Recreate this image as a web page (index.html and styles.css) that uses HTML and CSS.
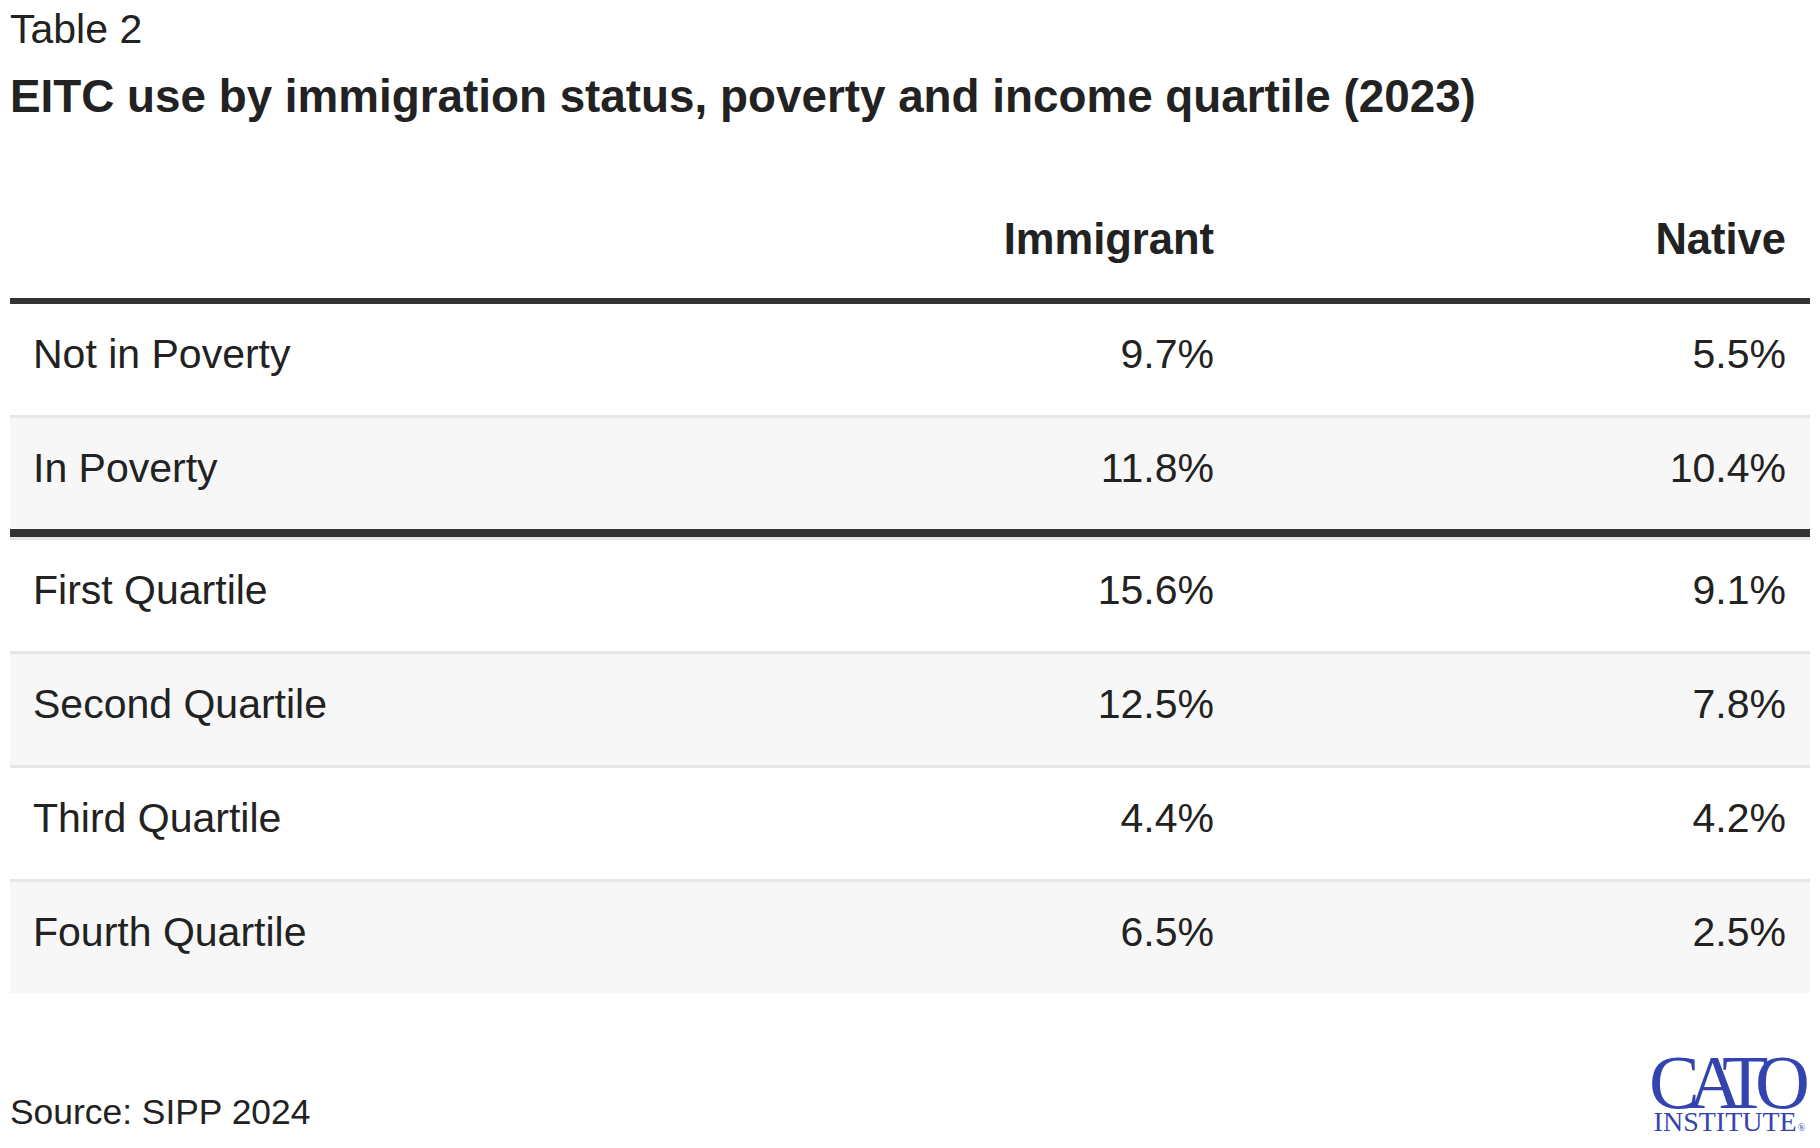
FILE: index.html
```html
<!DOCTYPE html>
<html lang="en">
<head>
<meta charset="utf-8">
<title>Table 2 – EITC use by immigration status</title>
<link rel="stylesheet" href="styles.css">
</head>
<body>
<div class="page">
  <div class="label">Table 2</div>
  <h1 class="title">EITC use by immigration status, poverty and income quartile (2023)</h1>

  <div class="table">
    <div class="thead">
      <div class="cell"></div>
      <div class="cell num">Immigrant</div>
      <div class="cell num">Native</div>
    </div>
    <div class="group first-group">
      <div class="row">
        <div class="cell">Not in Poverty</div>
        <div class="cell num">9.7%</div>
        <div class="cell num">5.5%</div>
      </div>
      <div class="row alt">
        <div class="cell">In Poverty</div>
        <div class="cell num">11.8%</div>
        <div class="cell num">10.4%</div>
      </div>
    </div>
    <div class="group second-group">
      <div class="row">
        <div class="cell">First Quartile</div>
        <div class="cell num">15.6%</div>
        <div class="cell num">9.1%</div>
      </div>
      <div class="row alt">
        <div class="cell">Second Quartile</div>
        <div class="cell num">12.5%</div>
        <div class="cell num">7.8%</div>
      </div>
      <div class="row">
        <div class="cell">Third Quartile</div>
        <div class="cell num">4.4%</div>
        <div class="cell num">4.2%</div>
      </div>
      <div class="row alt">
        <div class="cell">Fourth Quartile</div>
        <div class="cell num">6.5%</div>
        <div class="cell num">2.5%</div>
      </div>
    </div>
  </div>

  <div class="footer">
    <div class="source">Source: SIPP 2024</div>
    <div class="logo">
      <div class="logo-cato">CATO</div>
      <div class="logo-inst">INSTITUTE<span class="logo-reg">®</span></div>
    </div>
  </div>
</div>
</body>
</html>
```

FILE: styles.css
```css
html, body {
  margin: 0;
  padding: 0;
  background: #ffffff;
}

body {
  font-family: "Liberation Sans", Arial, sans-serif;
  color: #222222;
}

.page {
  padding: 0 10px;
}

.label {
  font-size: 41px;
  line-height: 48px;
  padding-top: 5px;
}

.title {
  margin: 16px 0 0 0;
  font-size: 45.8px;
  line-height: 56px;
  font-weight: bold;
}

.table {
  display: flex;
  flex-direction: column;
}

.thead,
.row {
  display: grid;
  grid-template-columns: 1fr 572px 572px;
}

.thead {
  border-bottom: 6px solid #333333;
}

.thead .cell {
  font-size: 43.5px;
  line-height: 50px;
  font-weight: bold;
  padding: 89px 24px 34px 23px;
}

.row {
  border-top: 3px solid #e6e6e6;
}

.first-group .row:first-child {
  border-top: none;
}

.second-group {
  border-top: 8px solid #333333;
}

.row.alt {
  background: #f7f7f7;
}

.row .cell {
  font-size: 41px;
  line-height: 48px;
  padding: 26px 24px 37px 23px;
}

.cell.num {
  text-align: right;
}

.footer {
  display: flex;
  justify-content: space-between;
  align-items: flex-end;
  margin-top: 60px;
}

.source {
  font-size: 35.4px;
  line-height: 40px;
  margin-bottom: 7px;
}

.logo {
  display: flex;
  flex-direction: column;
  align-items: center;
  color: #3344b0;
  font-family: "Liberation Serif", "Times New Roman", serif;
}

.logo-cato {
  font-size: 76px;
  line-height: 58px;
  letter-spacing: -12px;
  padding-right: 12px;
}

.logo-inst {
  font-size: 28px;
  line-height: 22px;
}

.logo-reg {
  font-size: 10px;
  margin-left: 1px;
}
```
